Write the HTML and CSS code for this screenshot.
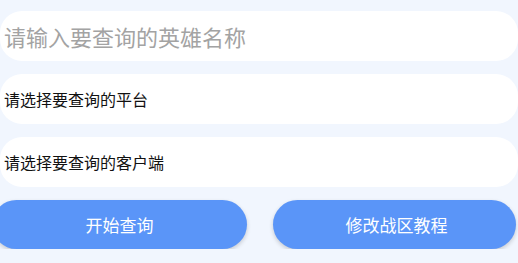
FILE: index.html
```html
<!DOCTYPE html>
<html lang="zh-CN">
<head>
  <meta charset="UTF-8">
  <title>英雄查询</title>
  <link rel="stylesheet" href="styles.css">
</head>
<body>

  <div class="form">
    <input class="field hero" type="text" placeholder="请输入要查询的英雄名称" />
    <div class="field select">请选择要查询的平台</div>
    <div class="field select">请选择要查询的客户端</div>

    <div class="actions">
      <button class="btn start">开始查询</button>
      <button class="btn guide">修改战区教程</button>
    </div>
  </div>

</body>
</html>
```

FILE: styles.css
```css
html, body {
  margin: 0;
  padding: 0;
  background: #f1f6fe;
  font-family: "Noto Sans CJK SC", "Noto Sans", sans-serif;
  overflow: hidden;
}

.form {
  display: flex;
  flex-direction: column;
  gap: 13px;
  padding-top: 11px;
}

.field {
  box-sizing: border-box;
  height: 50px;
  width: 100%;
  margin: 0;
  padding: 0 4px;
  border: none;
  border-radius: 22px;
  background: #fff;
  color: #111;
  font-family: inherit;
  outline: none;
}

.hero {
  font-size: 22px;
}

.hero::placeholder {
  color: #a3a3a3;
}

.select {
  display: flex;
  align-items: center;
  font-size: 16px;
}

.actions {
  display: flex;
  gap: 26px;
}

.btn {
  height: 49px;
  border: none;
  border-radius: 25px;
  background: #5a95f8;
  color: #fff;
  font-family: inherit;
  font-size: 17px;
  box-shadow: 0 2px 4px rgba(0, 0, 0, 0.18);
  cursor: pointer;
}

.start {
  flex: 0 0 255px;
  margin-left: -8px;
}

.guide {
  flex: 0 0 243px;
  padding-left: 10px;
}
```
